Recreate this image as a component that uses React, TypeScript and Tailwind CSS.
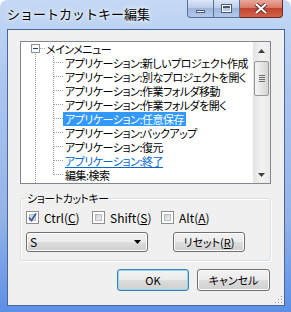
import React from "react";

const jp = "font-['Noto_Sans_CJK_JP','Noto_Sans_CJK_SC',sans-serif]";
const palt = "[font-feature-settings:'palt']";

const items = [
  "アプリケーション:新しいプロジェクト作成",
  "アプリケーション:別なプロジェクトを開く",
  "アプリケーション:作業フォルダ移動",
  "アプリケーション:作業フォルダを開く",
  "アプリケーション:任意保存",
  "アプリケーション:バックアップ",
  "アプリケーション:復元",
  "アプリケーション:終了",
  "編集:検索",
];

function TreeLines() {
  const rows = items.length;
  return (
    <svg className="absolute left-0 top-0" width="60" height="142" viewBox="0 0 60 142">
      <rect x="10.5" y="2.5" width="8" height="8" fill="#fff" stroke="#919191" />
      <rect x="12" y="6" width="5" height="1" fill="#1c3f94" />
      <line x1="19" y1="6.5" x2="24" y2="6.5" stroke="#a0a0a0" strokeDasharray="1 1" />
      <line x1="14.5" y1="12" x2="14.5" y2="142" stroke="#a0a0a0" strokeDasharray="1 1" />
      <line x1="32.5" y1="14" x2="32.5" y2={14 * rows + 7} stroke="#a0a0a0" strokeDasharray="1 1" />
      {items.map((_, i) => (
        <line key={i} x1="33" y1={14 * (i + 1) + 6.5} x2="42" y2={14 * (i + 1) + 6.5} stroke="#a0a0a0" strokeDasharray="1 1" />
      ))}
    </svg>
  );
}

function ScrollBar() {
  return (
    <div className="w-[17px] h-full flex flex-col bg-gradient-to-r from-[#e3e3e3] via-[#f2f2f2] to-[#eaeaea]">
      <div className="h-[17px] flex items-center justify-center">
        <svg width="7" height="4" viewBox="0 0 7 4"><path d="M0 4 L3.5 0 L7 4 Z" fill="#404040" /></svg>
      </div>
      <div className="mt-[2px] mx-[1px] h-[35px] rounded-[2px] border border-[#989898] bg-gradient-to-r from-[#f3f3f3] via-[#e6e6e6] to-[#d4d4d4] flex flex-col items-center justify-center gap-[1px]">
        <div className="w-[6px] h-[1px] bg-[#6d6d6d]" />
        <div className="w-[6px] h-[1px] bg-[#6d6d6d]" />
        <div className="w-[6px] h-[1px] bg-[#6d6d6d]" />
        <div className="w-[6px] h-[1px] bg-[#6d6d6d]" />
      </div>
      <div className="flex-1" />
      <div className="h-[17px] flex items-center justify-center">
        <svg width="7" height="4" viewBox="0 0 7 4"><path d="M0 0 L7 0 L3.5 4 Z" fill="#404040" /></svg>
      </div>
    </div>
  );
}

function Check({ checked }: { checked?: boolean }) {
  return (
    <div className="w-[13px] h-[13px] border border-[#8e8f8f] bg-white p-[2px] relative">
      <div className="w-full h-full bg-gradient-to-br from-[#cbcfd5] to-[#f4f4f4] border border-[#b9bcc2]" />
      {checked && (
        <svg className="absolute left-0 top-0" width="11" height="11" viewBox="0 0 11 11">
          <path d="M2 5.5 L4.5 8.5 L9 1.5" fill="none" stroke="#3a5aa0" strokeWidth="1.8" />
        </svg>
      )}
    </div>
  );
}

function Button({ children, focused, w }: { children: React.ReactNode; focused?: boolean; w: string }) {
  return (
    <div
      className={`${w} h-full rounded-[3px] border ${focused ? "border-[#3c7fb1] shadow-[inset_0_0_0_1px_#8fd8f8]" : "border-[#707070] shadow-[inset_0_0_0_1px_#fcfcfc]"} bg-[linear-gradient(#f2f2f2_0%,#ebebeb_50%,#dddddd_50%,#cfcfcf_100%)] flex items-center justify-center text-[11px] leading-none text-black ${palt}`}
    >
      {children}
    </div>
  );
}

export default function App() {
  return (
    <div className={`w-[291px] h-[312px] flex flex-col rounded-t-[7px] bg-[linear-gradient(#c5d9f5_0%,#aac4ee_30%,#93b3e8_70%,#5c8fe6_100%)] ${jp}`}>
      <div className="h-[29px] relative">
        <div className="pl-[7px] pt-[5px] text-[13px] leading-[17px] text-black [text-shadow:0_0_6px_#ffffff,0_0_3px_#ffffff]">
          ショートカットキー編集
        </div>
        <div className="absolute right-[8px] top-0 flex h-[18px]">
          <div className="w-[27px] h-full rounded-bl-[4px] border border-t-0 border-[#5a6f96] bg-[linear-gradient(#dce6f5,#b9cbe8_50%,#9fb5da_50%,#b4c8ea)] flex items-center justify-center">
            <div className="w-[9px] h-[3px] mt-[5px] bg-white border border-[#48597a]" />
          </div>
          <div className="w-[26px] h-full border border-t-0 border-l-0 border-[#5a6f96] bg-[linear-gradient(#dce6f5,#b9cbe8_50%,#9fb5da_50%,#b4c8ea)] flex items-center justify-center">
            <div className="w-[11px] h-[9px] border border-[#48597a] bg-white p-[1px]">
              <div className="w-full h-full border-t-[2px] border-[#48597a] bg-[#b9cbe8]" />
            </div>
          </div>
          <div className="w-[43px] h-full rounded-br-[4px] border border-t-0 border-l-0 border-[#6e2a24] bg-[linear-gradient(#e9a99c,#d77a68_45%,#c2432f_50%,#d4634a)] flex items-center justify-center">
            <svg width="14" height="11" viewBox="0 0 14 11">
              <path d="M2 1 L12 10 M12 1 L2 10" stroke="#5b2a22" strokeWidth="4" />
              <path d="M2 1 L12 10 M12 1 L2 10" stroke="#ffffff" strokeWidth="2.2" />
            </svg>
          </div>
        </div>
      </div>

      <div className="ml-[7px] w-[278px] h-[277px] border border-[#4a6897] bg-[#f0f0f0] relative">
        <div className="ml-[12px] mt-[11px] w-[251px] h-[143px] border border-[#828790] bg-white flex">
          <div className="flex-1 relative overflow-hidden">
            <TreeLines />
            <div className={`flex flex-col text-[11px] leading-[14px] tracking-[-0.5px] text-black ${palt}`}>
              <div className="h-[14px] pl-[25px] whitespace-nowrap">メインメニュー</div>
              {items.map((t, i) => (
                <div key={i} className="h-[14px] pl-[42px] whitespace-nowrap">
                  <span
                    className={`px-[2px] inline-block h-[14px] ${i === 4 ? "bg-[#3399ff] text-white" : ""} ${i === 7 ? "text-[#0066cc] underline" : ""}`}
                  >
                    {t}
                  </span>
                </div>
              ))}
            </div>
          </div>
          <ScrollBar />
        </div>

        <fieldset className="ml-[12px] mt-[7px] w-[251px] border border-[#d5dfe5] rounded-[3px] shadow-[inset_1px_1px_0_#ffffff,1px_1px_0_#ffffff] px-[5px] pb-[8px]">
          <legend className={`ml-0 px-[1px] text-[11px] leading-[14px] tracking-[-0.5px] text-black ${palt}`}>ショートカットキー</legend>
          <div className="mt-[6px] h-[13px] flex items-center text-[12px] leading-none text-black">
            <div className="w-[66px] flex items-center gap-[5px]">
              <Check checked />
              <span>Ctrl(<span className="underline">C</span>)</span>
            </div>
            <div className="w-[69px] flex items-center gap-[5px]">
              <Check />
              <span>Shift(<span className="underline">S</span>)</span>
            </div>
            <div className="flex items-center gap-[5px]">
              <Check />
              <span>Alt(<span className="underline">A</span>)</span>
            </div>
          </div>
          <div className="mt-[8px] h-[20px] flex gap-[25px]">
            <div className="w-[122px] h-full rounded-[3px] border border-[#707070] shadow-[inset_0_0_0_1px_#fcfcfc] bg-[linear-gradient(#f2f2f2_0%,#ebebeb_50%,#dddddd_50%,#cfcfcf_100%)] flex items-center justify-between pl-[3px] pr-[6px] text-[12px] leading-none text-black">
              <span>S</span>
              <svg width="7" height="4" viewBox="0 0 7 4"><path d="M0 0 L7 0 L3.5 4 Z" fill="#000" /></svg>
            </div>
            <Button w="w-[72px]">
              リセット(<span className="underline">R</span>)
            </Button>
          </div>
        </fieldset>

        <div className="mt-[8px] ml-[109px] h-[22px] flex gap-[8px]">
          <Button w="w-[72px]" focused>OK</Button>
          <Button w="w-[73px]">キャンセル</Button>
        </div>

        <svg className="absolute right-[1px] bottom-[1px]" width="9" height="9" viewBox="0 0 9 9">
          {[[7, 1], [7, 4], [4, 4], [7, 7], [4, 7], [1, 7]].map(([x, y], i) => (
            <rect key={i} x={x} y={y} width="1" height="1" fill="#a0a0a0" />
          ))}
        </svg>
      </div>
    </div>
  );
}
